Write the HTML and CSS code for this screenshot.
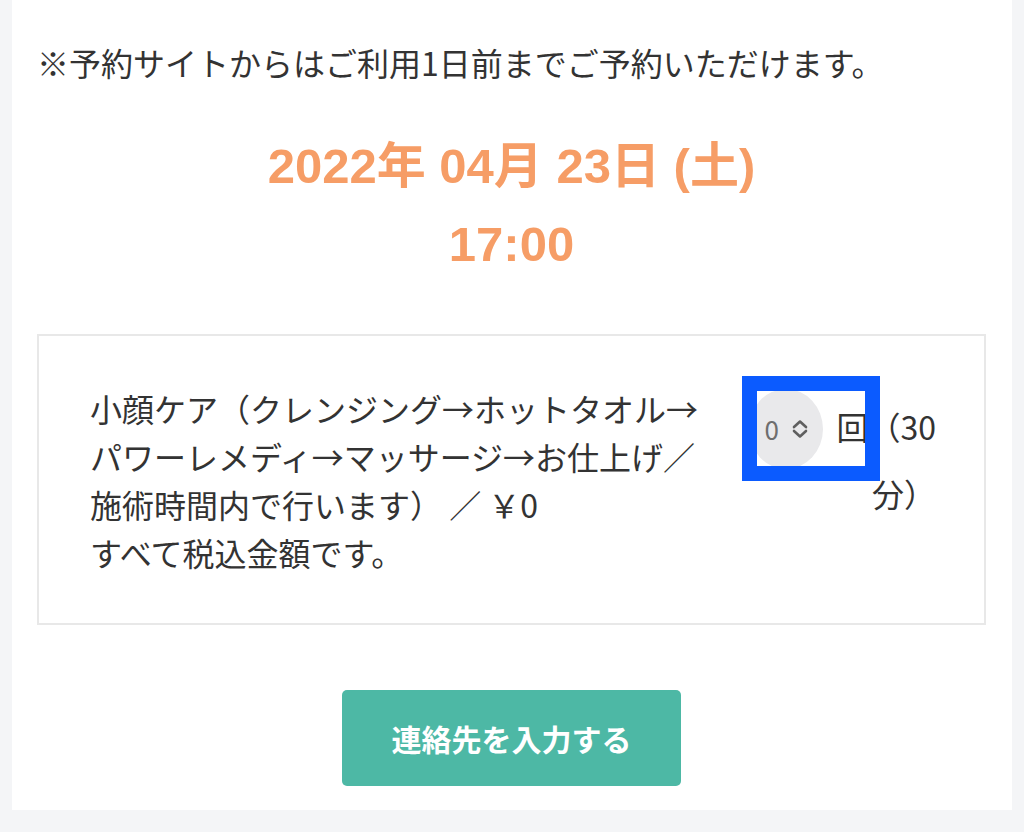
FILE: index.html
```html
<!DOCTYPE html>
<html lang="ja">
<head>
<meta charset="utf-8">
<title>予約</title>
<link rel="stylesheet" href="styles.css">
</head>
<body>
<main class="panel">
  <p class="note">※予約サイトからはご利用1日前までご予約いただけます。</p>
  <div class="datetime">
    <div>2022年 04月 23日 (土)</div>
    <div>17:00</div>
  </div>
  <section class="card">
    <div class="row">
      <div class="desc">小顔ケア（クレンジング→ホットタオル→パワーレメディ→マッサージ→お仕上げ／施術時間内で行います） ／ ￥0<br>すべて税込金額です。</div>
      <div class="qty"><span class="select"><span class="select-val">0</span><svg class="chev" width="20" height="22" viewBox="0 0 20 22"><path d="M4 9 L10 3.5 L16 9" /><path d="M4 13 L10 18.5 L16 13" /></svg></span>回（30分）</div>
    </div>
    <div class="highlight"></div>
  </section>
  <button class="cta" type="button">連絡先を入力する</button>
</main>
</body>
</html>
```

FILE: styles.css
```css
* { box-sizing: border-box; }
html, body { margin: 0; padding: 0; }
body {
  background: #f4f5f7;
  height: 832px;
  font-family: "Noto Sans CJK JP", sans-serif;
  color: #333;
}
.panel {
  margin: 0 12px;
  background: #fff;
  padding: 39px 26px 24px 25px;
  display: flex;
  flex-direction: column;
}
.note {
  margin: 0;
  font-size: 32px;
  line-height: 46px;
  white-space: nowrap;
}
.datetime {
  margin-top: 42px;
  text-align: center;
  font-family: "Liberation Sans", "Noto Sans CJK JP", sans-serif;
  font-weight: bold;
  font-size: 49px;
  line-height: 78px;
  color: #f69d66;
}
.card {
  position: relative;
  margin-top: 51px;
  border: 2px solid #e8e8e8;
  padding: 48px 48px 47px 51px;
}
.row {
  display: flex;
  align-items: flex-start;
}
.desc {
  width: 630px;
  font-size: 32px;
  line-height: 48px;
}
.qty {
  width: 196px;
  margin-left: auto;
  padding-top: 5px;
  text-align: right;
  font-size: 32px;
  line-height: 48px;
}
.select {
  display: inline-flex;
  align-items: center;
  gap: 11px;
  height: 80px;
  width: 74px;
  padding: 0 12px 0 15px;
  margin-right: 13px;
  background: #e9e9eb;
  border-radius: 37px / 40px;
  font-size: 26px;
  line-height: 1;
  color: #6e6e6e;
  vertical-align: baseline;
}
.chev {
  fill: none;
  stroke: #5f5f5f;
  stroke-width: 2.6;
  stroke-linecap: round;
  stroke-linejoin: round;
  flex: none;
}
.highlight {
  position: absolute;
  left: 703px;
  top: 40px;
  width: 138px;
  height: 105px;
  border: 15px solid #0b5bff;
}
.cta {
  align-self: center;
  margin-top: 65px;
  width: 339px;
  height: 96px;
  border: none;
  border-radius: 5px;
  background: #4db8a5;
  color: #fff;
  font-family: "Noto Sans CJK JP", sans-serif;
  font-weight: bold;
  font-size: 30px;
  padding: 0;
}
```
